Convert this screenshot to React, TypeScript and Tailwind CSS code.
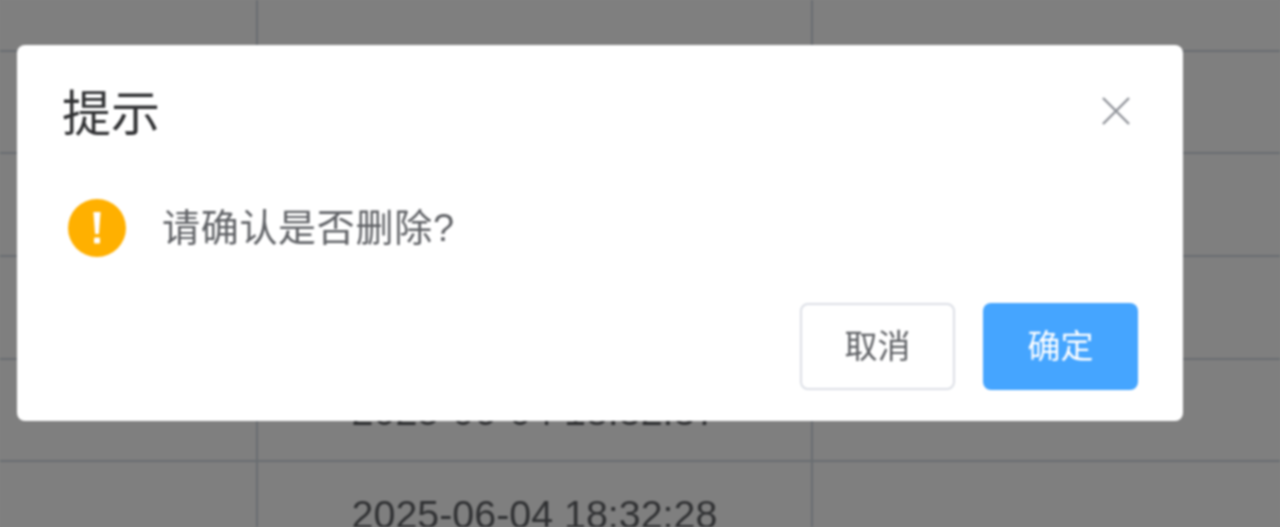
import React from "react";

const cjk = { fontFamily: '"Liberation Sans", "Noto Sans CJK SC", sans-serif' };

const rows: { h: string; time: string }[] = [
  { h: "h-[52px]", time: "" },
  { h: "h-[102px]", time: "" },
  { h: "h-[103px]", time: "" },
  { h: "h-[103px]", time: "" },
  { h: "h-[102px]", time: "2025-06-04 18:32:37" },
  { h: "h-[103px]", time: "2025-06-04 18:32:28" },
];

export default function App() {
  return (
    <div className="h-[527px] w-full overflow-hidden bg-[#808080]">
      <div className="relative h-[527px] w-full overflow-hidden bg-white blur-[1px]">
        <div className="flex flex-col font-['Liberation_Sans',sans-serif] text-[39.4px] text-[#606266]">
          {rows.map((r, i) => (
            <div key={i} className={`${r.h} flex shrink-0 border-b-2 border-[#d3dae2]`}>
              <div className="w-[258px] border-r-2 border-[#d3dae2]" />
              <div className="flex w-[555px] items-center justify-center border-r-2 border-[#d3dae2] pt-[4px] whitespace-nowrap">
                {r.time}
              </div>
              <div className="flex-1" />
            </div>
          ))}
        </div>
        <div className="absolute inset-0 bg-black/50" />
        <div
          className="absolute top-[45px] left-[17px] flex h-[376px] w-[1166px] flex-col rounded-[8px] bg-white pt-[33px] pr-[45px] pl-[46px]"
          style={cjk}
        >
          <div className="flex h-[64px] items-center justify-between">
            <span className="ml-[-1px] pt-[7px] text-[49px] leading-[64px] text-[#303133]">提示</span>
            <svg className="mt-[2px] mr-[7px] h-[30px] w-[30px]" viewBox="0 0 30 30" fill="none" stroke="#909399" strokeWidth="2.4">
              <path d="M2 2 L28 28 M28 2 L2 28" />
            </svg>
          </div>
          <div className="mt-[57px] flex h-[58px] items-center">
            <div className="ml-[5px] flex h-[58px] w-[58px] shrink-0 items-center justify-center rounded-full bg-[#ffb000]">
              <svg className="h-[34px] w-[8px]" viewBox="0 0 8 34" fill="#fff">
                <path d="M0.4 1 H7.6 L5.9 23 H2.1 Z" />
                <rect x="1" y="26.5" width="6" height="6" rx="1" />
              </svg>
            </div>
            <span className="ml-[36px] text-[38px] leading-[50px] tracking-[0.7px] text-[#606266]">请确认是否删除?</span>
          </div>
          <div className="mt-[46px] flex justify-end gap-[28px]">
            <button className="flex h-[87px] w-[155px] items-center justify-center rounded-[8px] border-2 border-[#dcdfe6] bg-white text-[33px] text-[#606266]">
              取消
            </button>
            <button className="flex h-[87px] w-[155px] items-center justify-center rounded-[8px] bg-[#45a5ff] text-[33px] text-white">
              确定
            </button>
          </div>
        </div>
      </div>
    </div>
  );
}
